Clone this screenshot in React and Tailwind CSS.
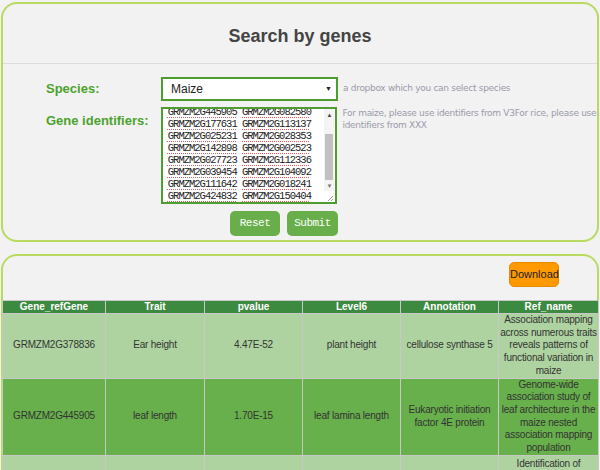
import React from "react";

const genes = [
  ["GRMZM2G445905", "GRMZM2G082580"],
  ["GRMZM2G177631", "GRMZM2G113137"],
  ["GRMZM2G025231", "GRMZM2G028353"],
  ["GRMZM2G142898", "GRMZM2G002523"],
  ["GRMZM2G027723", "GRMZM2G112336"],
  ["GRMZM2G039454", "GRMZM2G104092"],
  ["GRMZM2G111642", "GRMZM2G018241"],
  ["GRMZM2G424832", "GRMZM2G150404"],
];

const rows = [
  {
    cells: ["GRMZM2G378836", "Ear height", "4.47E-52", "plant height", "cellulose synthase 5"],
    ref: ["Association mapping", "across numerous traits", "reveals patterns of", "functional variation in", "maize"],
    bg: "bg-[#aed3a0]",
    h: "h-[64px]",
  },
  {
    cells: ["GRMZM2G445905", "leaf length", "1.70E-15", "leaf lamina length", "Eukaryotic initiation factor 4E protein"],
    ref: ["Genome-wide", "association study of", "leaf architecture in the", "maize nested", "association mapping", "population"],
    bg: "bg-[#68b04c]",
    h: "h-[77px]",
  },
  {
    cells: ["", "", "", "", ""],
    ref: ["Identification of"],
    bg: "bg-[#aed3a0]",
    h: "h-[40px]",
    top: true,
  },
];

const GeneText = () => (
  <div className="-mt-[3px] font-['Liberation_Mono',monospace] text-[10.5px] leading-[12px] tracking-[-1px] text-[#222] pl-[5px]">
    {genes.map((g, i) => (
      <div key={i} className="whitespace-nowrap">
        <span className="underline decoration-dotted decoration-[#e06060] underline-offset-2">{g[0]}</span>{" "}
        <span className="underline decoration-dotted decoration-[#e06060] underline-offset-2">{g[1]}</span>
      </div>
    ))}
  </div>
);

export default function App() {
  return (
    <div className="min-h-[470px] bg-[#f2f2f2] pt-[2px] px-[1px] font-['Liberation_Sans',Arial,sans-serif] overflow-hidden">
      {/* search panel */}
      <div className="h-[240px] rounded-[16px] border-2 border-[#b8da5e] bg-[#f2f2f2]">
        <div className="h-[60px] border-b border-[#dcdcdc] flex items-center justify-center pt-[6px]">
          <h1 className="text-[18px] font-bold text-[#444]">Search by genes</h1>
        </div>

        <div className="pl-[43px] pt-[13px] flex flex-col gap-[6px]">
          <div className="flex items-center">
            <label className="w-[115px] text-[13px] font-bold text-[#4ca22d]">Species:</label>
            <div className="w-[177px] h-[24px] border-2 border-[#4e9d2f] bg-white flex items-center justify-between pl-[8px] pr-[4px]">
              <span className="text-[12px] text-[#222]">Maize</span>
              <span className="text-[7px] text-[#222]">▼</span>
            </div>
            <span className="ml-[5px] text-[9px] text-[#9a9aaa] font-['DejaVu_Sans',sans-serif] tracking-[-0.3px]">
              a dropbox which you can select species
            </span>
          </div>

          <div className="flex items-start">
            <label className="w-[115px] text-[13px] font-bold text-[#4ca22d] pt-[4px]">Gene identifiers:</label>
            <div className="w-[177px] h-[97px] border-2 border-[#4e9d2f] bg-white flex overflow-hidden">
              <div className="flex-1 overflow-hidden">
                <GeneText />
              </div>
              <div className="w-[10px] flex flex-col items-center bg-[#f4f4f4] mr-[1px]">
                <span className="text-[6px] leading-[10px] text-[#444] mt-[1px]">▲</span>
                <div className="w-[8px] h-[46px] bg-[#c1c1c1] mt-[14px]"></div>
                <span className="text-[6px] leading-[10px] text-[#777] mt-[1px]">▼</span>
                <div className="flex-1 w-full bg-white flex items-end justify-end">
                  <svg width="8" height="8" viewBox="0 0 8 8">
                    <path d="M7 2 L2 7 M7 5 L5 7" stroke="#999" strokeWidth="1" />
                  </svg>
                </div>
              </div>
            </div>
            <p className="ml-[5px] w-[255px] text-[9px] leading-[12px] text-[#9a9aaa] font-['DejaVu_Sans',sans-serif] tracking-[-0.3px]">
              For maize, please use identifiers from V3For rice, please use identifiers from XXX
            </p>
          </div>

          <div className="flex pl-[184px] gap-[7px] mt-[1px]">
            <button className="w-[50px] h-[25px] rounded-[5px] bg-[#68ae4a] text-white text-[11px] font-['Liberation_Mono',monospace] tracking-[-0.5px]">
              Reset
            </button>
            <button className="w-[51px] h-[25px] rounded-[5px] bg-[#68ae4a] text-white text-[11px] font-['Liberation_Mono',monospace] tracking-[-0.5px]">
              Submit
            </button>
          </div>
        </div>
      </div>

      {/* results panel */}
      <div className="mt-[12px] rounded-t-[16px] border-2 border-b-0 border-[#b8da5e] bg-[#f2f2f2]">
        <div className="h-[44px] flex justify-end items-start pr-[38px] pt-[6px]">
          <button className="w-[50px] h-[25px] rounded-[5px] bg-[#ff9900] border border-[#e68a00] text-[11px] text-[#222]">
            Download
          </button>
        </div>
        <table className="w-full table-fixed border-collapse font-['Liberation_Sans',Arial,sans-serif] text-[10px] leading-[12.7px] tracking-[-0.2px] text-[#333] -ml-[1px]">
          <colgroup>
            <col className="w-[103px]" />
            <col className="w-[99px]" />
            <col className="w-[98px]" />
            <col className="w-[98px]" />
            <col className="w-[98px]" />
            <col className="w-[100px]" />
          </colgroup>
          <thead>
            <tr className="bg-[#3c8a3f] text-white h-[13px]">
              {["Gene_refGene", "Trait", "pvalue", "Level6", "Annotation", "Ref_name"].map((h) => (
                <th key={h} className="border border-[#c8c8c8] font-bold leading-[12px] p-0 tracking-normal">
                  {h}
                </th>
              ))}
            </tr>
          </thead>
          <tbody>
            {rows.map((r, i) => (
              <tr key={i} className={`${r.bg} ${r.h}`}>
                {r.cells.map((c, j) => (
                  <td key={j} className="border border-[#c8c8c8] text-center px-[4px] py-0 align-middle">
                    {c}
                  </td>
                ))}
                <td className={`border border-[#c8c8c8] text-center px-0 py-0 ${r.top ? "align-top pt-[2px]" : "align-middle"}`}>
                  {r.ref.map((line) => (
                    <div key={line} className="whitespace-nowrap">{line}</div>
                  ))}
                </td>
              </tr>
            ))}
          </tbody>
        </table>
      </div>
    </div>
  );
}
